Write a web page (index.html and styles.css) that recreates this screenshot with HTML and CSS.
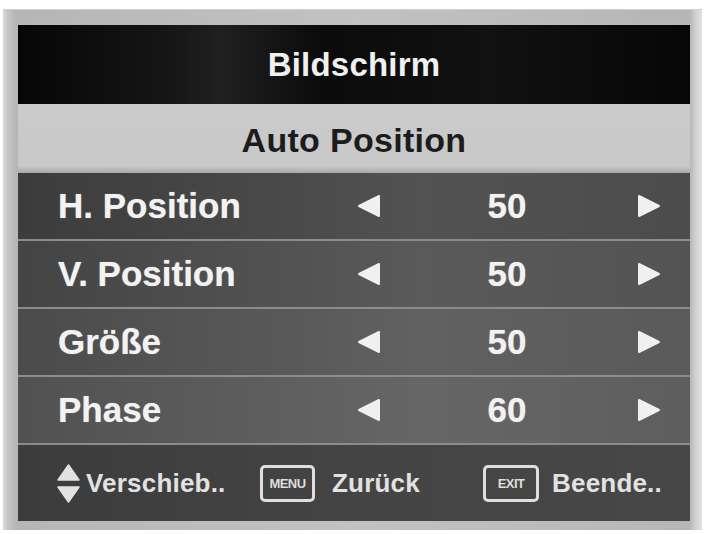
FILE: index.html
```html
<!DOCTYPE html>
<html lang="de">
<head>
<meta charset="utf-8">
<title>Bildschirm</title>
<link rel="stylesheet" href="styles.css">
</head>
<body>
<div class="frame">
  <div class="osd">
    <div class="title">Bildschirm</div>
    <div class="subtitle">Auto Position</div>
    <div class="rows">
      <div class="row row1">
        <span class="label">H. Position</span>
        <svg class="arrow" viewBox="0 0 24 24"><path d="M2 12 L22 2 L22 22 Z" fill="#f0f0f0" stroke="#f0f0f0" stroke-width="2" stroke-linejoin="round"/></svg>
        <span class="value">50</span>
        <svg class="arrow" viewBox="0 0 24 24"><path d="M22 12 L2 2 L2 22 Z" fill="#f0f0f0" stroke="#f0f0f0" stroke-width="2" stroke-linejoin="round"/></svg>
      </div>
      <div class="row row2">
        <span class="label">V. Position</span>
        <svg class="arrow" viewBox="0 0 24 24"><path d="M2 12 L22 2 L22 22 Z" fill="#f0f0f0" stroke="#f0f0f0" stroke-width="2" stroke-linejoin="round"/></svg>
        <span class="value">50</span>
        <svg class="arrow" viewBox="0 0 24 24"><path d="M22 12 L2 2 L2 22 Z" fill="#f0f0f0" stroke="#f0f0f0" stroke-width="2" stroke-linejoin="round"/></svg>
      </div>
      <div class="row row3">
        <span class="label">Größe</span>
        <svg class="arrow" viewBox="0 0 24 24"><path d="M2 12 L22 2 L22 22 Z" fill="#f0f0f0" stroke="#f0f0f0" stroke-width="2" stroke-linejoin="round"/></svg>
        <span class="value">50</span>
        <svg class="arrow" viewBox="0 0 24 24"><path d="M22 12 L2 2 L2 22 Z" fill="#f0f0f0" stroke="#f0f0f0" stroke-width="2" stroke-linejoin="round"/></svg>
      </div>
      <div class="row row4">
        <span class="label">Phase</span>
        <svg class="arrow" viewBox="0 0 24 24"><path d="M2 12 L22 2 L22 22 Z" fill="#f0f0f0" stroke="#f0f0f0" stroke-width="2" stroke-linejoin="round"/></svg>
        <span class="value">60</span>
        <svg class="arrow" viewBox="0 0 24 24"><path d="M22 12 L2 2 L2 22 Z" fill="#f0f0f0" stroke="#f0f0f0" stroke-width="2" stroke-linejoin="round"/></svg>
      </div>
    </div>
    <div class="footer">
      <div class="hint hint1">
        <svg class="updown" viewBox="0 0 23 39"><path d="M11.5 1 L22 16 L1 16 Z" fill="#e2e2e2" stroke="#e2e2e2" stroke-width="1.5" stroke-linejoin="round"/><path d="M1 23 L22 23 L11.5 38 Z" fill="#e2e2e2" stroke="#e2e2e2" stroke-width="1.5" stroke-linejoin="round"/></svg>
        <span class="htext">Verschieb..</span>
      </div>
      <div class="hint hint2">
        <span class="key key-menu">MENU</span>
        <span class="htext">Zurück</span>
      </div>
      <div class="hint hint3">
        <span class="key key-exit">EXIT</span>
        <span class="htext">Beende..</span>
      </div>
    </div>
  </div>
</div>
</body>
</html>
```

FILE: styles.css
```css
html, body {
  margin: 0;
  padding: 0;
  background: #ffffff;
}

body {
  width: 704px;
  height: 534px;
  overflow: hidden;
  font-family: "Liberation Sans", Arial, sans-serif;
  font-weight: bold;
}

.frame {
  margin: 9px 0 0 3px;
  width: 699px;
  height: 521px;
  box-sizing: border-box;
  padding: 15px 12px 10px 15px;
  background: linear-gradient(to right, #dadada 0, #c4c4c4 5px, #b6b6b6 13px, #c2c2c2 50%, #b6b6b6 calc(100% - 12px), #d2d2d2 calc(100% - 6px), #e0e0e0 100%);
  border-top: 1px solid #cfcfcf;
}

.osd {
  width: 672px;
  display: flex;
  flex-direction: column;
}

.title {
  height: 79px;
  display: flex;
  align-items: center;
  justify-content: center;
  background: linear-gradient(to right, #060606 0, #151515 22%, #202020 30%, #0b0b0b 45%, #111111 70%, #070707 100%);
  color: #f0f0f0;
  font-size: 33px;
  letter-spacing: 0.2px;
}

.subtitle {
  height: 69px;
  display: flex;
  align-items: center;
  justify-content: center;
  padding-top: 4px;
  box-sizing: border-box;
  background: linear-gradient(to bottom, #cbcbcb 0, #c8c8c8 90%, #a8a8a8 100%);
  color: #1c1c1c;
  font-size: 34px;
  letter-spacing: 0.3px;
}

.rows {
  display: flex;
  flex-direction: column;
}

.row {
  height: 66px;
  border-bottom: 2px solid #8c8c8c;
  display: grid;
  grid-template-columns: 299px 24px 256px 23px;
  align-items: center;
  padding-left: 40px;
  color: #f2f2f2;
  font-size: 35px;
  text-shadow: 0 0 1px rgba(255, 255, 255, 0.5);
}

.row1 { background: linear-gradient(to right, #3c3c3c 0, #4a4a4a 40%, #525252 60%, #4c4c4c 100%); }
.row2 { background: linear-gradient(to right, #444444 0, #525252 40%, #5a5a5a 60%, #535353 100%); }
.row3 { background: linear-gradient(to right, #4b4b4b 0, #595959 40%, #616161 60%, #5a5a5a 100%); }
.row4 { background: linear-gradient(to right, #515151 0, #5f5f5f 40%, #666666 60%, #5e5e5e 100%); }

.label {
  white-space: nowrap;
}

.arrow {
  width: 24px;
  height: 24px;
  display: block;
}

.value {
  text-align: center;
  padding-right: 4px;
}

.footer {
  height: 76px;
  display: grid;
  grid-template-columns: 203px 223px 1fr;
  align-items: center;
  padding-left: 39px;
  background: linear-gradient(to right, #3c3c3c 0, #444444 50%, #474747 100%);
  color: #e2e2e2;
  font-size: 26px;
}

.hint {
  display: flex;
  align-items: center;
}

.hint1 { gap: 6px; }
.hint2 { gap: 17px; }
.hint3 { gap: 13px; }

.updown {
  width: 23px;
  height: 39px;
  display: block;
}

.htext {
  white-space: nowrap;
  letter-spacing: 0.2px;
}

.key {
  box-sizing: border-box;
  height: 37px;
  border: 3px solid #dedede;
  border-radius: 5px;
  display: flex;
  align-items: center;
  justify-content: center;
  font-size: 13px;
  letter-spacing: -0.6px;
  color: #dedede;
}

.key-menu { width: 55px; }
.key-exit { width: 56px; }
```
